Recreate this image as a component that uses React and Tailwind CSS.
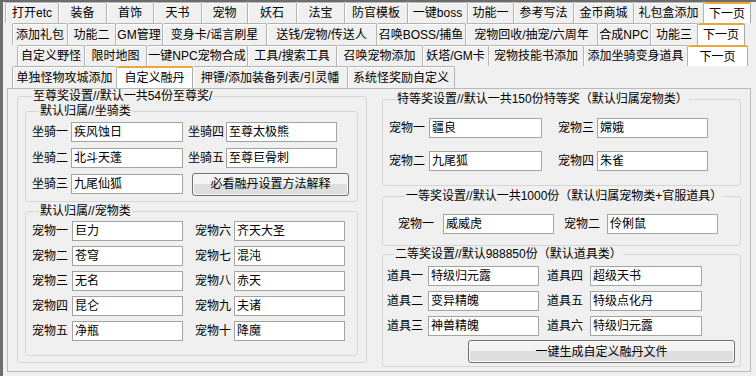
import React from 'react';

// tab rows of the editor window
const tabRows = [
  {
    pad: 'pl-[2px]',
    h: 'h-[21px]',
    tabs: [
      ['打开etc', 'w-[54px]'], ['装备', 'w-[48px]'], ['首饰', 'w-[47px]'], ['天书', 'w-[48px]'],
      ['宠物', 'w-[46px]'], ['妖石', 'w-[49px]'], ['法宝', 'w-[48px]'], ['防官模板', 'w-[63px]'],
      ['一键boss', 'w-[60px]'], ['功能一', 'w-[46px]'], ['参考写法', 'w-[60px]'], ['金币商城', 'w-[60px]'],
      ['礼包盒添加', 'w-[70px]'], ['下一页', 'w-[47px]', true],
    ],
  },
  {
    pad: 'pl-[9px]',
    h: 'h-[22px]',
    tabs: [
      ['添加礼包', 'w-[56px]'], ['功能二', 'w-[48px]'], ['GM管理', 'w-[47px]'], ['变身卡/谣言刷星', 'w-[104px]'],
      ['送钱/宠物/传送人', 'w-[110px]'], ['召唤BOSS/捕鱼', 'w-[89px]'], ['宠物回收/抽宠/六周年', 'w-[132px]'],
      ['合成NPC', 'w-[53px]'], ['功能三', 'w-[47px]'], ['下一页', 'w-[47px]', true],
    ],
  },
  {
    pad: 'pl-[14px]',
    h: 'h-[21px]',
    tabs: [
      ['自定义野怪', 'w-[68px]'], ['限时地图', 'w-[62px]'], ['一键NPC宠物合成', 'w-[101px]'], ['工具/搜索工具', 'w-[89px]'],
      ['召唤宠物添加', 'w-[86px]'], ['妖塔/GM卡', 'w-[66px]'], ['宠物技能书添加', 'w-[95px]'],
      ['添加坐骑变身道具', 'w-[104px]'], ['下一页', 'w-[60px]', true],
    ],
  },
  {
    pad: 'pl-[9px]',
    h: 'h-[22px]',
    tabs: [
      ['单独怪物攻城添加', 'w-[105px]'], ['自定义融丹', 'w-[76px]', true],
      ['押镖/添加装备列表/引灵幡', 'w-[155px]'], ['系统怪奖励自定义', 'w-[107px]'],
    ],
  },
];

const Tab = ({ label, w, active }) => (
  <div
    className={`${w} h-full shrink-0 flex items-center justify-center whitespace-nowrap rounded-t-[2px] border-r border-t first:border-l ${
      active
        ? 'bg-white border-[#a8a8a8] border-t-2 border-t-[#eaa73e]'
        : 'border-[#b4b4b4] shadow-[inset_1px_1px_0_#ffffff]'
    }`}
  >
    {label}
  </div>
);

const Field = ({ v, w = 'w-[111px]' }) => (
  <div className={`${w} h-[20px] shrink-0 bg-white border border-[#a3a3a3] px-[2px] leading-[18px] whitespace-nowrap`}>
    {v}
  </div>
);

const Label = ({ t, w }) => <div className={`${w} shrink-0 whitespace-nowrap`}>{t}</div>;

const Button = ({ t, cls }) => (
  <div
    className={`${cls} h-[23px] shrink-0 flex items-center justify-center rounded-[3px] border border-[#707070] bg-linear-to-b from-[#f4f4f4] from-50% to-[#dedede] to-50% shadow-[inset_0_0_0_1px_#fbfbfb]`}
  >
    {t}
  </div>
);

const Legend = ({ t }) => <legend className="ml-[7px] px-[1px] leading-[13px]">{t}</legend>;

export default function App() {
  return (
    <div className="w-[756px] h-[376px] overflow-hidden bg-[#f0f0f0] border-l-[3px] border-t-[2px] border-[#6d6d6d] text-[12px] leading-[14px] text-black font-['Liberation_Sans','Noto_Sans_CJK_SC',sans-serif]">
      {tabRows.map((row, i) => (
        <div key={i} className={`flex ${row.pad} ${row.h}`}>
          {row.tabs.map(([label, w, active]) => (
            <Tab key={label + i} label={label} w={w} active={active} />
          ))}
        </div>
      ))}

      <div className="ml-[4px] w-[744px] h-[284px] border border-[#b9b9b9] flex gap-[15px] pl-[9px]">
        {/* 左侧：至尊奖 */}
        <fieldset className="mt-[1px] w-[350px] h-[273px] border border-[#d5d5d5] rounded-[3px] pl-[7px]">
          <Legend t="至尊奖设置//默认一共54份至尊奖/" />
          <fieldset className="mt-[2px] w-[333px] border border-[#d5d5d5] rounded-[3px] pl-[6px] pt-[4px] pb-[5px]">
            <Legend t="默认归属//坐骑类" />
            <div className="flex items-center h-[20px]">
              <Label t="坐骑一" w="w-[39px]" />
              <Field v="疾风蚀日" w="w-[112px]" />
              <Label t="坐骑四" w="w-[38px] ml-[5px]" />
              <Field v="至尊太极熊" />
            </div>
            <div className="flex items-center h-[20px] mt-[6px]">
              <Label t="坐骑二" w="w-[39px]" />
              <Field v="北斗天蓬" w="w-[112px]" />
              <Label t="坐骑五" w="w-[38px] ml-[5px]" />
              <Field v="至尊巨骨刺" />
            </div>
            <div className="flex items-center h-[24px] mt-[4px]">
              <Label t="坐骑三" w="w-[39px]" />
              <Field v="九尾仙狐" w="w-[112px]" />
              <Button t="必看融丹设置方法解释" cls="ml-[9px] w-[157px]" />
            </div>
          </fieldset>

          <fieldset className="mt-[3px] w-[333px] border border-[#d5d5d5] rounded-[3px] pl-[6px] pt-[3px] pb-[14px]">
            <Legend t="默认归属//宠物类" />
            <div className="flex flex-col gap-[5px]">
              {[
                ['宠物一', '巨力', '宠物六', '齐天大圣'],
                ['宠物二', '苍穹', '宠物七', '混沌'],
                ['宠物三', '无名', '宠物八', '赤天'],
                ['宠物四', '昆仑', '宠物九', '夫诸'],
                ['宠物五', '净瓶', '宠物十', '降魔'],
              ].map(([a, av, b, bv]) => (
                <div key={a} className="flex items-center h-[20px]">
                  <Label t={a} w="w-[40px]" />
                  <Field v={av} />
                  <Label t={b} w="w-[39px] ml-[12px]" />
                  <Field v={bv} />
                </div>
              ))}
            </div>
          </fieldset>
        </fieldset>

        {/* 右侧 */}
        <div className="w-[359px] flex flex-col">
          <fieldset className="mt-[4px] border border-[#d5d5d5] rounded-[3px] pl-[6px] pt-[12px] pb-[14px]">
            <Legend t="特等奖设置//默认一共150份特等奖（默认归属宠物类）" />
            <div className="flex items-center h-[20px]">
              <Label t="宠物一" w="w-[40px]" />
              <Field v="疆良" w="w-[113px]" />
              <Label t="宠物三" w="w-[39px] ml-[16px]" />
              <Field v="嫦娥" />
            </div>
            <div className="flex items-center h-[20px] mt-[13px]">
              <Label t="宠物二" w="w-[40px]" />
              <Field v="九尾狐" w="w-[113px]" />
              <Label t="宠物四" w="w-[39px] ml-[16px]" />
              <Field v="朱雀" />
            </div>
          </fieldset>

          <fieldset className="mt-[4px] border border-[#d5d5d5] rounded-[3px] pl-[15px] pt-[11px] pb-[11px]">
            <Legend t="一等奖设置//默认一共1000份（默认归属宠物类+官服道具）" />
            <div className="flex items-center h-[20px]">
              <Label t="宠物一" w="w-[45px]" />
              <Field v="威威虎" />
              <Label t="宠物二" w="w-[43px] ml-[10px]" />
              <Field v="伶俐鼠" />
            </div>
          </fieldset>

          <fieldset className="mt-[2px] border border-[#d5d5d5] rounded-[3px] pl-[4px] pt-[5px] pb-[3px]">
            <Legend t="二等奖设置//默认988850份（默认道具类）" />
            <div className="flex flex-col gap-[5px]">
              {[
                ['道具一', '特级归元露', '道具四', '超级天书'],
                ['道具二', '变异精魄', '道具五', '特级点化丹'],
                ['道具三', '神兽精魄', '道具六', '特级归元露'],
              ].map(([a, av, b, bv]) => (
                <div key={a} className="flex items-center h-[20px]">
                  <Label t={a} w="w-[41px]" />
                  <Field v={av} />
                  <Label t={b} w="w-[43px] ml-[8px]" />
                  <Field v={bv} w="w-[112px]" />
                </div>
              ))}
            </div>
            <Button t="一键生成自定义融丹文件" cls="mt-[4px] ml-[81px] w-[267px]" />
          </fieldset>
        </div>
      </div>
    </div>
  );
}
